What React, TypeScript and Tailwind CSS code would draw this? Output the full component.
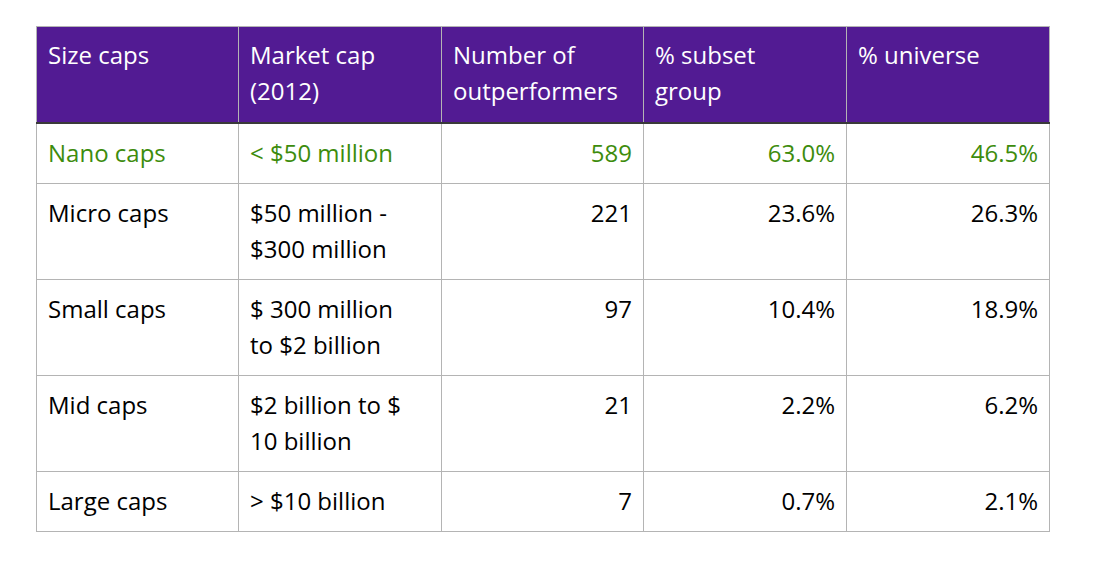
const header = [["Size caps"], ["Market cap", "(2012)"], ["Number of", "outperformers"], ["% subset", "group"], ["% universe"]];

const rows = [
  { size: "Nano caps", cap: ["< $50 million"], n: "589", subset: "63.0%", uni: "46.5%", green: true },
  { size: "Micro caps", cap: ["$50 million -", "$300 million"], n: "221", subset: "23.6%", uni: "26.3%" },
  { size: "Small caps", cap: ["$ 300 million", "to $2 billion"], n: "97", subset: "10.4%", uni: "18.9%" },
  { size: "Mid caps", cap: ["$2 billion to $", "10 billion"], n: "21", subset: "2.2%", uni: "6.2%" },
  { size: "Large caps", cap: ["> $10 billion"], n: "7", subset: "0.7%", uni: "2.1%" },
];

function Lines({ lines }: { lines: string[] }) {
  return (
    <>
      {lines.map((l, i) => (
        <div key={i} className="whitespace-nowrap">{l}</div>
      ))}
    </>
  );
}

export default function App() {
  return (
    <div className="w-[1100px] h-[570px] bg-white pl-[36px] pt-[26px]" style={{ fontFamily: "'Open Sans', 'Noto Sans', sans-serif" }}>
      <table className="border-collapse table-fixed w-[1013px] text-[24px] leading-[36px]">
        <colgroup>
          <col className="w-[202px]" />
          <col className="w-[203px]" />
          <col className="w-[202px]" />
          <col className="w-[203px]" />
          <col className="w-[203px]" />
        </colgroup>
        <thead>
          <tr className="bg-[#521b93] text-white h-[96px]">
            {header.map((h) => (
              <th key={h[0]} className="border border-[#b4b4b4] border-b-2 border-b-[#3a3a3a] align-top text-left font-normal px-[11px] pt-[10px] pb-[10px]">
                <Lines lines={h} />
              </th>
            ))}
          </tr>
        </thead>
        <tbody>
          {rows.map((r) => {
            const color = r.green ? "text-[#3d8c0d]" : "text-black";
            const cell = "border border-[#b4b4b4] align-top px-[11px] pt-[11px] pb-[12px] " + color;
            return (
              <tr key={r.size}>
                <td className={cell}>{r.size}</td>
                <td className={cell}>
                  <Lines lines={r.cap} />
                </td>
                <td className={cell + " text-right"}>{r.n}</td>
                <td className={cell + " text-right"}>{r.subset}</td>
                <td className={cell + " text-right"}>{r.uni}</td>
              </tr>
            );
          })}
        </tbody>
      </table>
    </div>
  );
}
